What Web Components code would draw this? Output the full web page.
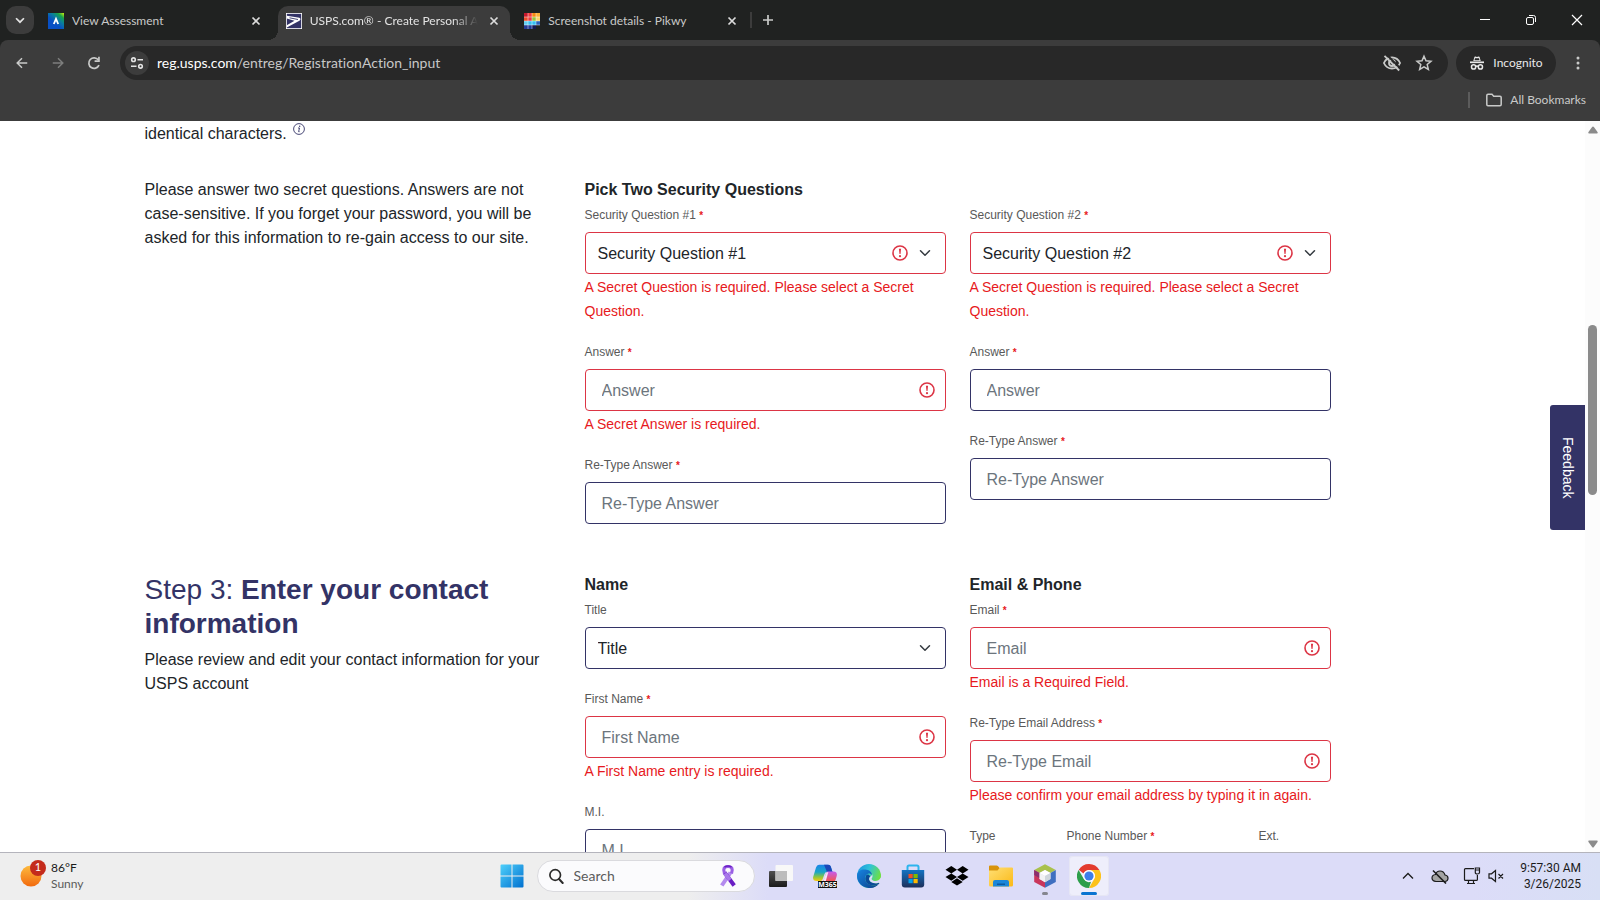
<!DOCTYPE html>
<html lang="en">
<head>
<meta charset="utf-8">
<title>USPS.com® - Create Personal Account</title>
<style>
  html, body { margin: 0; height: 100%; }
  body { overflow: hidden; background: #fff; font-family: "Liberation Sans", Arial, sans-serif; }
</style>
</head>
<body>
<desktop-screen></desktop-screen>

<script>
const UI_FONT = 'Lato, "Open Sans", sans-serif';

/* name: [viewBox, markup] */
const ICONS = {
  chevron: ['0 0 16 16', '<path d="M3.5 6l4.5 4.5L12.500 6" fill="none" stroke="currentColor" stroke-width="2"/>'],
  close: ['0 0 16 16', '<path d="M4.500 4.500l7 7M11.500 4.500l-7 7" stroke="currentColor" stroke-width="1.700"/>'],
  plus: ['0 0 16 16', '<path d="M8 3v10M3 8h10" stroke="currentColor" stroke-width="1.700"/>'],
  minimize: ['0 0 16 16', '<path d="M3 7.500h10" stroke="currentColor" stroke-width="1"/>'],
  restore: ['0 0 16 16', '<g fill="none" stroke="currentColor"><rect x="3.500" y="5.500" width="7" height="7" rx="1.500"/><path d="M6 3.500h4.500a2 2 0 0 1 2 2V10"/></g>'],
  winclose: ['0 0 16 16', '<path d="M3 3l10 10M13 3L3 13" stroke="currentColor" stroke-width="1.200"/>'],
  back: ['0 0 16 16', '<path d="M14 8H3M8 2.500L2.500 8 8 13.500" fill="none" stroke="currentColor" stroke-width="1.700"/>'],
  forward: ['0 0 16 16', '<path d="M2 8h11M8 2.500L13.500 8 8 13.500" fill="none" stroke="currentColor" stroke-width="1.700"/>'],
  reload: ['0 0 16 16', '<path d="M13 10.200A5.300 5.300 0 1 1 12.300 4.800" fill="none" stroke="currentColor" stroke-width="1.700"/><path d="M13.800 1.800v5.200H8.600V5.300h3.500V1.800z" fill="currentColor"/>'],
  tune: ['0 0 16 16', '<g fill="none" stroke="currentColor" stroke-width="1.600"><circle cx="4.500" cy="4.700" r="1.800"/><circle cx="11.500" cy="11.300" r="1.800"/><path d="M8.500 4.700H14M2 11.300h5.500"/></g>'],
  eyeoff: ['0 0 20 20', '<g fill="none" stroke="currentColor" stroke-width="1.800"><path d="M10 4.500c4 0 6.800 2.600 8.100 5.500-1.300 2.900-4.100 5.500-8.100 5.500S3.200 12.900 1.900 10C3.200 7.100 6 4.500 10 4.500z"/><circle cx="10" cy="10" r="3"/></g><path d="M4.500 1.500l14 14" stroke="#282828" stroke-width="2"/><path d="M2.500 2.800l14.700 14.700" stroke="currentColor" stroke-width="1.800"/>'],
  star: ['0 0 20 20', '<path d="M10 3.200l2 4.600 5 .45-3.800 3.300 1.150 4.900L10 13.850l-4.350 2.600 1.150-4.900L3 8.250l5-.45z" fill="none" stroke="currentColor" stroke-width="1.500"/>'],
  incognito: ['0 0 16 16', '<path d="M4.300 6L5.400 2.100q.25-.8 1-.55L8 2l1.600-.45q.75-.25 1 .55L11.700 6z" fill="currentColor"/><path d="M6 3.300h4l.5 2h-5z" fill="#282828"/><path d="M1 7.300h14" stroke="currentColor" stroke-width="1.700"/><g fill="none" stroke="currentColor" stroke-width="1.500"><circle cx="4.600" cy="11.900" r="2.100"/><circle cx="11.400" cy="11.900" r="2.100"/><path d="M6.500 11.500q1.500-.8 3 0"/></g>'],
  dots: ['0 0 16 16', '<g fill="currentColor"><circle cx="8" cy="3" r="1.500"/><circle cx="8" cy="8" r="1.500"/><circle cx="8" cy="13" r="1.500"/></g>'],
  folder: ['0 0 16 16', '<path d="M.8 3.500q0-1.200 1.200-1.200h4l1.700 1.900H14q1.200 0 1.200 1.200v7.100q0 1.200-1.200 1.200H2q-1.200 0-1.200-1.200z" fill="none" stroke="currentColor" stroke-width="1.500"/>'],
  favassess: ['0 0 16 16', '<defs><linearGradient id="a" x1="1" y1="0" x2=".3" y2=".8"><stop offset="0" stop-color="#d5f20a"/><stop offset=".25" stop-color="#17a34a"/><stop offset=".5" stop-color="#0a7f9c"/><stop offset=".8" stop-color="#0850c4"/></linearGradient></defs><path d="M0 0h16v16H0z" fill="url(#a)"/><path d="M5.800 11L8 5.800l2.200 5.200" fill="none" stroke="#fff" stroke-width="1.800"/>'],
  favusps: ['0 0 16 16', '<path d="M0 0h16v16H0z" fill="#fff"/><path d="M.8.8h14.400v14.400H.8z" fill="#333366"/><path d="M.8 2.800L12 4.600q3 .5 2.300 2.200-.5 1.300-2.300 1.700L.8 14.500v-2.300L8.500 7.800.8 5.400z" fill="#fff"/><path d="M3.500 4.800L12 6.500" stroke="#333366" stroke-width=".9"/>'],
  favpikwy: ['0 0 16 16', '<path d="M0 0h4v4H0z" fill="#c5182c"/><path d="M4 0h4v4H4z" fill="#f33b3b"/><path d="M8 0h4v4H8z" fill="#f68a12"/><path d="M12 0h4v4h-4z" fill="#fbb034"/><path d="M0 4h4v4H0z" fill="#ee4b2b"/><path d="M4 4h4v4H4z" fill="#e83c46"/><path d="M8 4h4v4H8z" fill="#9ac43c"/><path d="M12 4h4v4h-4z" fill="#fcd36a"/><path d="M0 8h4v4H0z" fill="#63cdf0"/><path d="M4 8h8v4H4z" fill="#35c0f4"/><path d="M12 8h4v4h-4z" fill="#2a60b8"/><path d="M0 12h12v4H0z" fill="#233a94"/><path d="M8 12h4v4H8z" fill="#141a55"/><path d="M4 0v16M8 0v16M12 0v12M0 4h16M0 8h16M0 12h16" stroke="#fff" stroke-width=".6" opacity=".75"/>'],
  info: ['0 0 12 12', '<circle cx="6" cy="6" r="5.400" fill="none" stroke="#333366" stroke-width=".9"/><path d="M5 5h1.500l-.9 3.700h1" fill="none" stroke="#333366" stroke-width=".9"/><circle cx="6.700" cy="3.200" r=".7" fill="#333366"/>'],
  alert: ['0 0 18 18', '<circle cx="9" cy="9" r="7" fill="none" stroke="#dc3545" stroke-width="1.600"/><path d="M7.900 4.700h2.200L9.500 10h-1z" fill="#dc3545"/><circle cx="9" cy="12.200" r="1.100" fill="#dc3545"/>'],
  selectarrow: ['0 0 16 16', '<path d="M2 5l6 6 6-6" fill="none" stroke="#343a40" stroke-width="2" stroke-linecap="round" stroke-linejoin="round"/>'],
  arrowup: ['0 0 10 8', '<path d="M5 0.500q.5 0 .9.600l3.600 5q.6 1-.5 1.400H1Q-.1 7.100.5 6.100l3.600-5Q4.500.5 5 .5z" fill="#8b8b8b"/>'],
  arrowdown: ['0 0 10 8', '<path d="M5 7.500q.5 0 .9-.6l3.600-5Q10.100.9 9 .5H1Q-.1.900.5 1.900l3.600 5q.4.600.9.600z" fill="#8b8b8b"/>'],
  weather: ['0 0 28 28', '<defs><linearGradient id="w" x1="0" y1="0" x2="0" y2="1"><stop offset="0" stop-color="#fdbb3f"/><stop offset="1" stop-color="#f26a0e"/></linearGradient></defs><circle cx="11" cy="16" r="10.500" fill="url(#w)"/><circle cx="18" cy="8" r="8" fill="#c42b1c"/>'],
  windows: ['0 0 24 24', '<defs><linearGradient id="g" x1="0" y1="0" x2="1" y2="1"><stop offset="0" stop-color="#4fd0fb"/><stop offset="1" stop-color="#0070cf"/></linearGradient></defs><path d="M1.500.5H11.500V11.500H.5V1.500q0-1 1-1zM12.500.5H22.500q1 0 1 1v10H12.500zM.5 12.500h11v11h-10q-1 0-1-1zM12.500 12.500h11v10q0 1-1 1H12.500z" fill="url(#g)"/>'],
  search: ['0 0 16 16', '<circle cx="7.200" cy="7" r="5.300" fill="none" stroke="#2b2b2b" stroke-width="1.700"/><path d="M11 11l3.700 4" stroke="#2b2b2b" stroke-width="2" stroke-linecap="round"/>'],
  ribbon: ['0 0 20 24', '<path d="M12.500 8.500L3.800 21.500" fill="none" stroke="#b48bee" stroke-width="4"/><path d="M6.500 8.500l9.700 13" fill="none" stroke="#6a1ec4" stroke-width="4"/><path d="M7 9.500l5 6.500" fill="none" stroke="#a878ea" stroke-width="4"/><path d="M6.500 9.500Q4 2.500 10 2.500t3.500 7" fill="none" stroke="#9a5fe4" stroke-width="3.200"/><path d="M6.500 3Q10 1 13.500 3" fill="none" stroke="#6a1ec4" stroke-width="1.500"/>'],
  taskview: ['0 0 24 24', '<defs><linearGradient id="t" x1="0" y1="0" x2="0" y2="1"><stop offset="0" stop-color="#505050"/><stop offset="1" stop-color="#1b1b1b"/></linearGradient></defs><rect x="0" y="7" width="18" height="16" rx="1" fill="url(#t)"/><rect x="6.500" y="1" width="17.500" height="16" rx="1" fill="#f8f8f8"/><path d="M6.500 7H18v10H6.500z" fill="#bcbcbc"/>'],
  copilot: ['0 0 24 24', '<defs><linearGradient id="c" x1="0" y1="0" x2="0" y2="1"><stop offset="0" stop-color="#1b84e8"/><stop offset=".45" stop-color="#19a6c8"/><stop offset=".75" stop-color="#8cc63f"/><stop offset="1" stop-color="#f9c80e"/></linearGradient><linearGradient id="d" x1="0" y1="0" x2="0" y2="1"><stop offset="0" stop-color="#c55bf0"/><stop offset="1" stop-color="#f5564a"/></linearGradient></defs><path d="M6 .8h9c2 0 2.600 1 3 2.400L19.500 8H14q-2 0-2.600 2.200L9.700 15q-.6 2-2.200 2H3.500C.7 17-.5 15.300.3 12.500L3 3.500Q3.800.8 6 .8z" fill="url(#c)"/><path d="M11 .8h4c2 0 2.600 1 3 2.400L19.500 8H14z" fill="#1b48b8"/><path d="M14.500 7.500h6c2.700 0 3.900 1.800 3.200 4.500L22.500 16q-.5 1.500-2.500 1.500H9.500q1.500-.5 2.300-3.500l1-4q.7-2.500 1.700-2.500z" fill="url(#d)"/><path d="M10.500 17l2.300-7q.7-2 2.500-2l-2.500 9z" fill="#f7e6f8"/><path d="M5 17h19v7H5z" fill="#111"/><text x="14.500" y="23" text-anchor="middle" font-family="Open Sans, sans-serif" font-weight="700" font-size="7" fill="#fff">M365</text>'],
  edge: ['0 0 24 24', '<defs><linearGradient id="e" x1="0" y1="0" x2="1" y2=".4"><stop offset="0" stop-color="#1a8fe0"/><stop offset=".5" stop-color="#2fc2d8"/><stop offset="1" stop-color="#6ee043"/></linearGradient><linearGradient id="f" x1="0" y1="0" x2="1" y2="1"><stop offset="0" stop-color="#1684e0"/><stop offset="1" stop-color="#0d3f8a"/></linearGradient></defs><circle cx="12" cy="12" r="12" fill="url(#e)"/><path d="M.1 11C1 6 5.500 5 9.500 5.800c4 .8 5.500 3.200 5.500 5.400-1-1.500-2.500-2-4-1.500-4 1.200-4.500 9 2.500 11.300 3 1 6 .4 8.500-1.300C19.500 23 15.500 24.300 11.500 24 5 23.500-.5 18 .1 11z" fill="url(#f)"/><path d="M9.300 11.300C7 15 9 20 13.500 21c3 1 6 .4 8.500-1.300.6-.5.3-1.200-.5-.9-3.500 1.300-8.500.2-9.300-3.300-.2-1 .3-2 .9-2.500-.1-2.200-2.300-3.300-3.800-1.700z" fill="#0b4b98"/><path d="M13 12.800c1-.4 2-1.200 2-2.800 0 0 1.300 2.500-.2 4.200-.5.6-.2 2 1.700 2.500 2.500.6 5.500.2 7.200-3 .6 0 1.600-1 2.300-2.500-.1 4-1.300 6.500-2.500 8-.4.300-1.200-.5-2-.4-3.500 1.300-8.500.2-9.300-3.300-.2-1 .2-2 .8-2.700z" fill="#dcdcf8"/>'],
  store: ['0 0 24 24', '<defs><linearGradient id="s" x1="0" y1="0" x2="0" y2="1"><stop offset="0" stop-color="#1473c2"/><stop offset="1" stop-color="#1d2f5a"/></linearGradient></defs><path d="M6.500 7V3q0-1.500 1.500-1.500h8q1.500 0 1.500 1.500v4" fill="none" stroke="#2cb4ee" stroke-width="2"/><path d="M.8 6h22.400v14.500q0 3-3 3H3.800q-3 0-3-3z" fill="url(#s)"/><path d="M7.500 10h4.200v4.200H7.500z" fill="#f25022"/><path d="M12.500 10h4.200v4.200h-4.200z" fill="#7fba00"/><path d="M7.500 15h4.200v4.200H7.500z" fill="#00a4ef"/><path d="M12.500 15h4.200v4.200h-4.200z" fill="#ffb900"/>'],
  dropbox: ['0 0 24 24', '<path d="M6.300 2l5.700 3.700-5.700 3.700L.5 5.700zM17.700 2l5.800 3.700-5.800 3.700L12 5.700zM.5 13l5.800-3.600L12 13l-5.700 3.700zM17.700 9.400l5.800 3.600-5.800 3.700L12 13zM6.300 17.900l5.700-3.700 5.700 3.700-5.700 3.700z" fill="#000"/>'],
  explorer: ['0 0 24 24', '<defs><linearGradient id="x" x1="0" y1="0" x2="1" y2="1"><stop offset="0" stop-color="#ffdf75"/><stop offset="1" stop-color="#fbb916"/></linearGradient></defs><path d="M0 2.500q0-1 1-1h6.500q1 0 1.600.8L11 4.500V8H0z" fill="#d8930b"/><path d="M0 6.500h8.500L11 3.500h12q1 0 1 1V21q0 1.500-1.500 1.500h-21Q0 22.500 0 21z" fill="url(#x)"/><path d="M4 22.500V18q0-2 2-2h12q2 0 2 2v4.500z" fill="#1b86d8"/><path d="M8 19.500h8v1.500H8z" fill="#0d5a9f"/>'],
  netbeans: ['0 0 24 24', '<path d="M12 .3l10.800 5.800L17.500 9 12 6 6.500 9 1.200 6.100z" fill="#a9c14c"/><path d="M1.200 6.100L6.500 9v6l5.500 3.200v5.500L1.200 17.900z" fill="#c9365c"/><path d="M1.200 6.100L6.500 9v5L1.200 11z" fill="#8a2f6e"/><path d="M22.800 6.100L17.500 9v6L12 18.200v5.500l10.800-5.800z" fill="#3f6fc0"/><path d="M12 6l5.500 3-5.500 3-5.500-3z" fill="#fff"/><path d="M6.500 9l5.500 3v6.200L6.500 15z" fill="#f2f3f4"/><path d="M17.500 9L12 12v6.200l5.500-3.200z" fill="#cfd6dc"/>'],
  chrome: ['0 0 24 24', '<path d="M12 0a12 12 0 0 1 10.400 6H12a6 6 0 0 0-5.500 3.600L1.800 5.700A12 12 0 0 1 12 0z" fill="#e33b2e"/><path d="M22.400 6A12 12 0 0 1 12 24l5.200-9A6 6 0 0 0 12 6z" fill="#fcc21b"/><path d="M1.600 6l5.200 9A6 6 0 0 0 14 17.700L12 24A12 12 0 0 1 1.600 6z" fill="#2d9f4b"/><circle cx="12" cy="12" r="5.800" fill="#fff"/><circle cx="12" cy="12" r="4.600" fill="#3d7eea"/>'],
  caret: ['0 0 16 16', '<path d="M3 10.500l5-5 5 5" fill="none" stroke="#1b1b1b" stroke-width="1.300"/>'],
  cloudoff: ['0 0 18 16', '<path d="M5 13.500h8.500q3.500-.3 3.500-3.300 0-2.700-3-3.200Q12.800 3 9 3 5.500 3 4.500 6.500 1 7 1 10q0 3 4 3.500z" fill="#a3a3a3" stroke="#1b1b1b" stroke-width="1.200"/><path d="M2 2.500l13 13" stroke="#1b1b1b" stroke-width="1.600"/>'],
  monitor: ['0 0 18 18', '<g fill="none" stroke="#1b1b1b" stroke-width="1.200"><path d="M11 1.600H2.500q-1 0-1 1v9.800q0 1 1 1h10.900q1 0 1-1V8M5.500 13.500v3M10.500 13.500v3M4 16.500h8"/><path d="M12.300 1h4.200v4.500q0 1.500-2.100 1.500t-2.100-1.500zM12.300 3h4.200"/></g>'],
  mute: ['0 0 18 16', '<g fill="none" stroke="#1b1b1b" stroke-width="1.200"><path d="M2 5.800h2.500L8.500 2.500v11L4.500 10.200H2zM11.500 6l4.500 4.500M16 6l-4.500 4.500"/></g>']
};

function define(name, template) {
  customElements.define(name, class extends HTMLElement {
    connectedCallback() {
      if (this.shadowRoot) return;
      const root = this.attachShadow({ mode: 'open' });
      root.innerHTML = typeof template === 'function' ? template(this) : template;
    }
  });
}

define('ui-icon', el => {
  const [box, markup] = ICONS[el.getAttribute('name')];
  const [, , w, h] = box.split(' ');
  const width = el.getAttribute('size') || w;
  return `<style>:host{display:inline-block;flex:none;line-height:0}svg{display:block}</style>
    <svg viewBox="${box}" width="${width}" height="${Math.round(width * h / w)}" aria-hidden="true">${markup}</svg>`;
});

/* ---------- browser chrome ---------- */

define('browser-tab', el => `
  <style>
    :host { display: flex; align-items: center; flex: 0 1 232px; height: 34px; box-sizing: border-box; padding: 0 8px 5px;
      position: relative; gap: 8px; color: #c9cac9; border-radius: 10px 10px 0 0; font: 12px/16px ${UI_FONT}; }
    :host([active]) { background: #3c3c3c; color: #e3e3e3; }
    :host([active])::before, :host([active])::after { content: ""; position: absolute; bottom: 0; width: 10px; height: 10px; }
    :host([active])::before { right: 100%; background: radial-gradient(circle at 0 0, transparent 10px, #3c3c3c 10px); }
    :host([active])::after { left: 100%; background: radial-gradient(circle at 100% 0, transparent 10px, #3c3c3c 10px); }
    .title { flex: 1; overflow: hidden; white-space: nowrap; }
    :host([active]) .title { -webkit-mask-image: linear-gradient(to right, #000 85%, transparent); mask-image: linear-gradient(to right, #000 85%, transparent); }
    button { all: unset; display: flex; color: #dcdcdc; }
  </style>
  <ui-icon name="${el.getAttribute('icon')}"></ui-icon>
  <span class="title"><slot></slot></span>
  <button aria-label="Close tab"><ui-icon name="close"></ui-icon></button>`);

define('tab-strip', `
  <style>
    :host { display: flex; height: 40px; background: #202221; padding-left: 6px; align-items: stretch; }
    button { all: unset; display: flex; align-items: center; justify-content: center; color: #e3e3e3; }
    .search { width: 28px; height: 28px; margin: 6px 6px 0 0; border-radius: 10px; background: #3c3c3c; flex: none; }
    .tabs { display: flex; gap: 6px; padding-top: 6px; flex: 0 1 708px; min-width: 0; }
    .rule { width: 2px; height: 16px; margin: 12px 8px 0 2px; background: #3c3c3c; }
    .new { width: 16px; height: 40px; color: #c9cac9; }
    .window { display: flex; margin-left: auto; }
    .window button { width: 46px; color: #fff; }
  </style>
  <button class="search" aria-label="Search tabs"><ui-icon name="chevron" size="14"></ui-icon></button>
  <div class="tabs">
    <browser-tab icon="favassess">View Assessment</browser-tab>
    <browser-tab icon="favusps" active>USPS.com® - Create Personal A</browser-tab>
    <browser-tab icon="favpikwy">Screenshot details - Pikwy</browser-tab>
  </div>
  <span class="rule"></span>
  <button class="new" aria-label="New tab"><ui-icon name="plus"></ui-icon></button>
  <div class="window">
    <button aria-label="Minimize"><ui-icon name="minimize"></ui-icon></button>
    <button aria-label="Restore"><ui-icon name="restore"></ui-icon></button>
    <button aria-label="Close"><ui-icon name="winclose"></ui-icon></button>
  </div>`);

define('nav-bar', `
  <style>
    :host { display: block; background: #202221; font: 12px/16px ${UI_FONT}; color: #e3e3e3; }
    .bar { display: flex; align-items: center; gap: 8px; padding: 6px 8px; background: #3c3c3c; border-radius: 8px 8px 0 0; }
    button { all: unset; display: flex; align-items: center; justify-content: center; width: 28px; height: 28px; color: #c9cac9; }
    button:disabled { color: #7d7e7d; }
    .omnibox { display: flex; align-items: center; flex: 1; height: 34px; box-sizing: border-box; margin-left: 4px;
      padding: 0 14px 0 5px; border-radius: 17px; background: #282828; }
    .omnibox .site { width: 24px; height: 24px; border-radius: 12px; background: #3c3c3c; color: #e3e3e3; margin-right: 8px; }
    .url { flex: 1; font-size: 14px; line-height: 20px; color: #c7c7c7; white-space: nowrap; overflow: hidden; font-variant-ligatures: none; }
    .url b { font-weight: 400; color: #fff; }
    .omnibox .tool { width: 20px; margin-left: 12px; }
    .chip { width: 100px; height: 34px; gap: 8px; border-radius: 17px; background: #282828; color: #e9e9e9; }
  </style>
  <div class="bar">
    <button aria-label="Back"><ui-icon name="back" size="14"></ui-icon></button>
    <button aria-label="Forward" disabled><ui-icon name="forward" size="14"></ui-icon></button>
    <button aria-label="Reload"><ui-icon name="reload"></ui-icon></button>
    <div class="omnibox">
      <button class="site" aria-label="View site information"><ui-icon name="tune"></ui-icon></button>
      <span class="url"><b>reg.usps.com</b>/entreg/RegistrationAction_input</span>
      <button class="tool" aria-label="Third-party cookies blocked"><ui-icon name="eyeoff"></ui-icon></button>
      <button class="tool" aria-label="Bookmark this tab"><ui-icon name="star"></ui-icon></button>
    </div>
    <button class="chip"><ui-icon name="incognito"></ui-icon>Incognito</button>
    <button aria-label="Menu"><ui-icon name="dots"></ui-icon></button>
  </div>`);

define('bookmark-bar', `
  <style>
    :host { display: flex; justify-content: flex-end; align-items: center; height: 28px; padding: 0 14px 7px 0;
      background: #3c3c3c; font: 12px/16px ${UI_FONT}; color: #c9cac9; }
    .rule { width: 2px; height: 16px; margin-right: 16px; background: #5c5c5c; }
    button { all: unset; display: flex; align-items: center; gap: 8px; }
  </style>
  <span class="rule"></span>
  <button><ui-icon name="folder"></ui-icon>All Bookmarks</button>`);

/* ---------- registration form ---------- */

define('form-field', el => {
  const a = n => el.getAttribute(n) || '';
  const error = a('error'), select = el.hasAttribute('select');
  const bad = error ? 'aria-invalid="true" aria-describedby="e"' : '';
  return `
  <style>
    :host { display: block; min-width: 0; margin-bottom: 17px; }
    label { display: block; font-size: 12px; line-height: 26px; margin-bottom: 4px; color: #595959; white-space: nowrap; }
    label span { font-size: 10px; line-height: 12px; font-weight: 700; color: #e71921; }
    .box { position: relative; }
    input, select { display: block; width: 100%; height: 42px; box-sizing: border-box; margin: 0; border: 1px solid #333366;
      border-radius: 4px; background: #fff; color: #212529; font: 16px/24px "Liberation Sans", Arial, sans-serif; outline: none; }
    input { padding: 2px 16px 0; }
    select { appearance: none; padding: 2px 12px 0; }
    input::placeholder { color: #6c757d; opacity: 1; }
    [aria-invalid] { border-color: #dc3545; }
    .icons { position: absolute; right: 10px; top: 12px; height: 18px; display: flex; align-items: center; gap: 10px; pointer-events: none; }
    select + .icons { right: 15px; }
    p { margin: 1px 0 -1px; font-size: 14px; line-height: 24px; color: #e71921; }
  </style>
  <label for="f">${a('label')}${el.hasAttribute('required') ? ' <span>*</span>' : ''}</label>
  <div class="box">
    ${select ? `<select id="f" ${bad}><option>${a('value')}</option></select>`
             : `<input id="f" type="text" placeholder="${a('placeholder')}" ${bad}>`}
    <div class="icons">${error ? '<ui-icon name="alert"></ui-icon>' : ''}${select ? '<ui-icon name="selectarrow" size="12"></ui-icon>' : ''}</div>
  </div>
  ${error ? `<p id="e">${error}</p>` : ''}`;
});

define('form-section', `
  <style>
    :host { display: grid; grid-template-columns: 416fr 361fr 361fr 86fr; gap: 24px; max-width: 1296px; margin: 0 auto 32px; padding: 0 12px;
      font-size: 16px; line-height: 24px; color: #212529; }
    .side, .col { min-width: 0; }
    ::slotted(h2) { margin: 0 0 7px; font-size: 28px; line-height: 34px; font-weight: 400; color: #333366; }
    ::slotted(p) { margin: 0; }
    ::slotted(h3) { margin: 0; font-size: 16px; line-height: 24px; min-height: 24px; }
  </style>
  <div class="side"><slot name="side"></slot></div>
  <div class="col"><slot name="first"></slot></div>
  <div class="col"><slot name="second"></slot></div>`);

define('registration-page', `
  <style>
    :host { display: block; overflow: hidden; background: #fff; padding-top: 1px; }
    .phone { display: grid; grid-template-columns: 73fr 168fr 72fr; gap: 24px; }
    .hint { margin-left: 2px; vertical-align: 4px; }
  </style>
  <form-section>
    <p slot="side">identical characters. <ui-icon class="hint" name="info" size="12"></ui-icon></p>
  </form-section>
  <form-section>
    <p slot="side">Please answer two secret questions. Answers are not case-sensitive. If you forget your password, you will be asked for this information to re-gain access to our site.</p>
    <h3 slot="first">Pick Two Security Questions</h3>
    <form-field slot="first" select required label="Security Question #1" value="Security Question #1" error="A Secret Question is required. Please select a Secret Question."></form-field>
    <form-field slot="first" required label="Answer" placeholder="Answer" error="A Secret Answer is required."></form-field>
    <form-field slot="first" required label="Re-Type Answer" placeholder="Re-Type Answer"></form-field>
    <h3 slot="second"></h3>
    <form-field slot="second" select required label="Security Question #2" value="Security Question #2" error="A Secret Question is required. Please select a Secret Question."></form-field>
    <form-field slot="second" required label="Answer" placeholder="Answer"></form-field>
    <form-field slot="second" required label="Re-Type Answer" placeholder="Re-Type Answer"></form-field>
  </form-section>
  <form-section>
    <h2 slot="side">Step 3: <b>Enter your contact</b> <b>information</b></h2>
    <p slot="side">Please review and edit your contact information for your USPS account</p>
    <h3 slot="first">Name</h3>
    <form-field slot="first" select label="Title" value="Title"></form-field>
    <form-field slot="first" required label="First Name" placeholder="First Name" error="A First Name entry is required."></form-field>
    <form-field slot="first" label="M.I." placeholder="M.I."></form-field>
    <h3 slot="second">Email &amp; Phone</h3>
    <form-field slot="second" required label="Email" placeholder="Email" error="Email is a Required Field."></form-field>
    <form-field slot="second" required label="Re-Type Email Address" placeholder="Re-Type Email" error="Please confirm your email address by typing it in again."></form-field>
    <div slot="second" class="phone">
      <form-field select label="Type"></form-field>
      <form-field required label="Phone Number"></form-field>
      <form-field label="Ext."></form-field>
    </div>
  </form-section>`);

define('page-scrollbar', `
  <style>
    :host { display: flex; flex-direction: column; align-items: center; width: 15px; box-sizing: border-box; padding: 5px 0 4px; background: #fcfcfc; }
    .track { flex: 1; display: grid; grid-template-rows: 191fr 171fr 345fr; }
    .thumb { grid-row: 2; width: 9px; border-radius: 5px; background: #8b8b8b; }
  </style>
  <ui-icon name="arrowup"></ui-icon>
  <div class="track"><div class="thumb"></div></div>
  <ui-icon name="arrowdown"></ui-icon>`);

define('feedback-tab', `
  <style>
    :host { display: block; }
    button { all: unset; display: flex; align-items: center; justify-content: center; writing-mode: vertical-rl; width: 35px; height: 125px;
      border-radius: 3px 0 0 3px; background: #333366; color: #fff; font: 14px/20px "Liberation Sans", Arial, sans-serif; }
  </style>
  <button>Feedback</button>`);

/* ---------- taskbar ---------- */

define('task-app', el => `
  <style>
    :host { display: block; }
    button { all: unset; position: relative; display: flex; align-items: center; justify-content: center; width: 40px; height: 40px; border-radius: 4px; }
    :host([state=active]) button { background: #eeeefb; box-shadow: 0 0 0 1px #e6e6f4 inset; }
    :host([state]) button::after { content: ""; position: absolute; bottom: 1px; width: 6px; height: 3px; border-radius: 2px; background: #85868f; }
    :host([state=active]) button::after { width: 16px; background: #0a74d1; }
  </style>
  <button aria-label="${el.getAttribute('label')}"><ui-icon name="${el.getAttribute('icon')}"></ui-icon></button>`);

define('task-bar', `
  <style>
    :host { display: grid; grid-template-columns: 1fr auto 1fr; align-items: center; height: 45px; padding-bottom: 2px; border-top: 1px solid #b4b4bc;
      background: linear-gradient(to right, #eeeeee 43%, #dcdcf8 48%, #dcdcf8 92%, #d8dff5); font: 12px/16px ${UI_FONT}; color: #1b1b1b; }
    .weather { display: flex; align-items: center; justify-self: start; gap: 3px; padding-left: 20px; position: relative; }
    .weather ui-icon { margin-bottom: 4px; }
    .weather .count { position: absolute; left: 30px; top: 0; width: 16px; text-align: center; color: #fff; font-size: 11px; line-height: 14px; }
    .weather small { display: block; font-size: 12px; color: #5a5a5a; }
    .apps { display: flex; align-items: center; gap: 4px; }
    .search { display: flex; align-items: center; gap: 10px; width: 218px; height: 32px; box-sizing: border-box; padding: 0 16px 0 10px;
      margin: 0 2px 0 1px; border: 1px solid #dadade; border-radius: 16px; background: #fbfbfd; }
    input { all: unset; flex: 1; min-width: 0; font: 14px/20px ${UI_FONT}; color: #5c5c5c; }
    input::placeholder { color: #5c5c5c; opacity: 1; }
    .tray { display: flex; align-items: center; justify-self: end; padding-right: 19px; }
    .cloud { margin-left: 15px; }
    .net { margin: 0 6px 0 14px; }
    .clock { margin-left: 15px; text-align: right; font-family: Roboto, sans-serif; }
  </style>
  <div class="weather">
    <ui-icon name="weather"></ui-icon><span class="count">1</span>
    <div>86°F<small>Sunny</small></div>
  </div>
  <div class="apps">
    <task-app icon="windows" label="Start"></task-app>
    <label class="search"><ui-icon name="search"></ui-icon><input type="text" placeholder="Search" aria-label="Search"><ui-icon name="ribbon"></ui-icon></label>
    <task-app icon="taskview" label="Task view"></task-app>
    <task-app icon="copilot" label="Microsoft 365 Copilot"></task-app>
    <task-app icon="edge" label="Microsoft Edge"></task-app>
    <task-app icon="store" label="Microsoft Store"></task-app>
    <task-app icon="dropbox" label="Dropbox"></task-app>
    <task-app icon="explorer" label="File Explorer"></task-app>
    <task-app icon="netbeans" label="NetBeans" state="running"></task-app>
    <task-app icon="chrome" label="Google Chrome" state="active"></task-app>
  </div>
  <div class="tray">
    <ui-icon name="caret"></ui-icon>
    <ui-icon name="cloudoff" class="cloud"></ui-icon>
    <ui-icon name="monitor" class="net"></ui-icon>
    <ui-icon name="mute"></ui-icon>
    <div class="clock">9:57:30 AM<br>3/26/2025</div>
  </div>`);

define('desktop-screen', `
  <style>
    :host { display: flex; flex-direction: column; height: 100vh; }
    main { flex: 1; min-height: 0; display: flex; position: relative; }
    registration-page { flex: 1; min-width: 0; }
    feedback-tab { position: absolute; right: 15px; top: 284px; }
  </style>
  <tab-strip></tab-strip>
  <nav-bar></nav-bar>
  <bookmark-bar></bookmark-bar>
  <main>
    <registration-page></registration-page>
    <feedback-tab></feedback-tab>
    <page-scrollbar></page-scrollbar>
  </main>
  <task-bar></task-bar>`);
</script>
</body>
</html>
